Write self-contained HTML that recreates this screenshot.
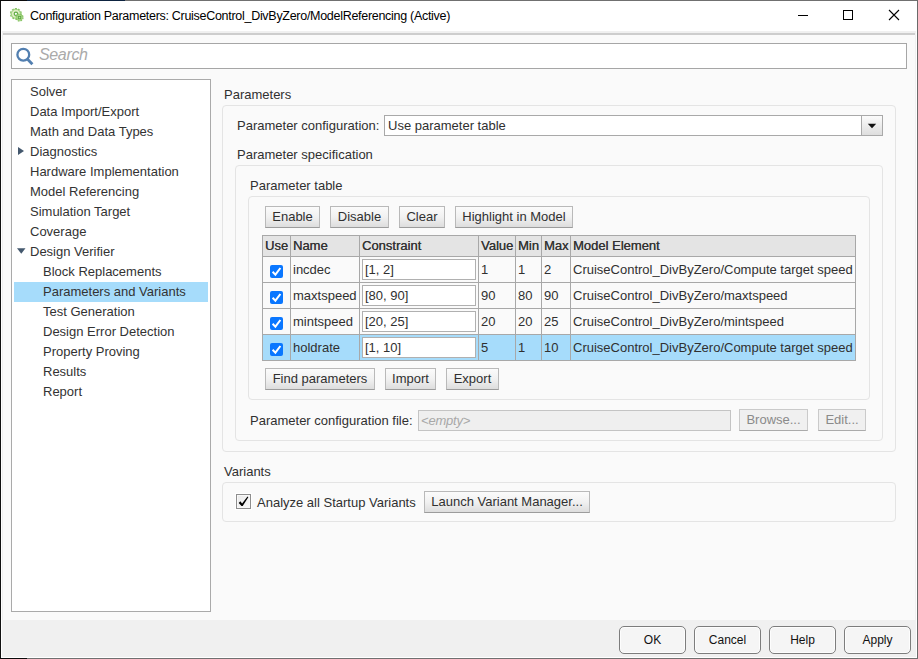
<!DOCTYPE html>
<html>
<head>
<meta charset="utf-8">
<title>Configuration Parameters</title>
<style>
html,body{margin:0;padding:0;}
body{width:918px;height:659px;overflow:hidden;background:#fff;font-family:"Liberation Sans",Arial,sans-serif;font-size:13px;color:#222;position:relative;}
.abs{position:absolute;}
#win{position:absolute;left:0;top:0;width:918px;height:659px;background:#fff;}
#bl{left:0;top:0;width:1px;height:659px;background:#111;}
#bt{left:0;top:0;width:918px;height:1px;background:linear-gradient(90deg,#0a0a0a 0,#0a0a0a 27px,#0d2340 27px,#0d2340 125px,#707070 125px);}
#br{left:917px;top:0;width:1px;height:659px;background:#6a6a6a;}
#bb{left:0;top:658px;width:918px;height:1px;background:linear-gradient(90deg,#0a0a0a 0,#0a0a0a 27px,#707070 27px);}
#title{left:30px;top:8px;font-size:12.5px;letter-spacing:-0.29px;line-height:16px;color:#000;white-space:nowrap;}
#client{left:2px;top:31px;width:914px;height:626px;background:#f0f0f0;}
#sep{left:3px;top:33px;width:912px;height:2px;background:#cdcdcd;}
#content{left:3px;top:35px;width:912px;height:585px;background:#fafafa;}
#search{left:11px;top:43px;width:894px;height:24px;border:1px solid #a6a6a6;background:#fff;}
#search .ph{left:27px;top:2px;font-size:16px;letter-spacing:-0.35px;line-height:18px;font-style:italic;color:#aaa;}
#tree{left:11px;top:79px;width:198px;height:531px;border:1px solid #aaa;background:#fff;}
.ti{position:absolute;left:18px;height:20px;line-height:20px;white-space:nowrap;color:#333;}
.ti.c{left:31px;}
#sel{left:2px;top:202px;width:194px;height:20px;background:#a6dcfb;}
.lbl{position:absolute;white-space:nowrap;line-height:16px;color:#303030;}
.grp{position:absolute;border:1px solid #e4e4e4;border-radius:4px;box-sizing:border-box;}
.btn{position:absolute;box-sizing:border-box;border:1px solid #b9b9b9;border-bottom-color:#9c9c9c;background:linear-gradient(#fbfbfb,#f1f1f1 50%,#dddddd);text-align:center;white-space:nowrap;color:#303030;}
.btn.dis{color:#8a8a8a;background:#f0f0f0;border-color:#cacaca;border-bottom-color:#ababab;}
.fbtn{position:absolute;box-sizing:border-box;border:1px solid #7d7d7d;background:#f5f5f5;border-radius:5px;text-align:center;color:#111;font-size:12px;box-shadow:inset 0 0 0 1px #fdfdfd;}

#sel2{}
.sbox{position:absolute;box-sizing:border-box;border:1px solid #a9a9a9;background:#fff;}
#ptab{position:absolute;left:262px;top:235px;border-collapse:collapse;table-layout:fixed;width:594px;}
#ptab td,#ptab th{border:1px solid #a8a8a8;padding:0 2px;font-size:13px;font-weight:normal;text-align:left;white-space:nowrap;overflow:hidden;color:#303030;box-sizing:border-box;}
#ptab th{height:21px;background:#e4e4e4;line-height:17px;padding-bottom:2px;color:#333;text-shadow:0.2px 0 0 #444;}
#ptab td{height:26px;background:#fafafa;line-height:23px;}
#ptab tr.hl td{background:#a6dcfb;}
#ptab .inp{display:block;box-sizing:border-box;width:114px;height:21px;border:1px solid #b0b0b0;background:#fff;line-height:20px;padding:0 2px;}
.cb{display:block;width:13px;height:13px;background:#0a77ff;border-radius:2px;margin:2px 0 0 5px;position:relative;top:1px;}
.cb svg{position:absolute;left:0;top:0;}

</style>
</head>
<body>
<div id="win">
  <div class="abs" id="title">Configuration Parameters: CruiseControl_DivByZero/ModelReferencing (Active)</div>
  <div class="abs" id="client"></div>
  <div class="abs" id="sep"></div>
  <div class="abs" id="content"></div>

  <div class="abs" id="search"><div class="abs ph">Search</div></div>

  <div class="abs" id="tree">
    <div class="abs" id="sel"></div>
    <div class="ti" style="top:2px">Solver</div>
    <div class="ti" style="top:22px">Data Import/Export</div>
    <div class="ti" style="top:42px">Math and Data Types</div>
    <div class="ti" style="top:62px">Diagnostics</div>
    <div class="ti" style="top:82px">Hardware Implementation</div>
    <div class="ti" style="top:102px">Model Referencing</div>
    <div class="ti" style="top:122px">Simulation Target</div>
    <div class="ti" style="top:142px">Coverage</div>
    <div class="ti" style="top:162px">Design Verifier</div>
    <div class="ti c" style="top:182px">Block Replacements</div>
    <div class="ti c" style="top:202px">Parameters and Variants</div>
    <div class="ti c" style="top:222px">Test Generation</div>
    <div class="ti c" style="top:242px">Design Error Detection</div>
    <div class="ti c" style="top:262px">Property Proving</div>
    <div class="ti c" style="top:282px">Results</div>
    <div class="ti c" style="top:302px">Report</div>
  </div>

  <!-- MAIN -->
  <div class="lbl" style="left:224px;top:87px">Parameters</div>
  <div class="grp" style="left:222px;top:105px;width:674px;height:347px"></div>
  <div class="lbl" style="left:237px;top:118px">Parameter configuration:</div>
  <div class="lbl" style="left:237px;top:147px">Parameter specification</div>
  <div class="grp" style="left:235px;top:165px;width:648px;height:276px"></div>
  <div class="lbl" style="left:250px;top:178px">Parameter table</div>
  <div class="grp" style="left:248px;top:196px;width:622px;height:204px"></div>

  <div class="lbl" style="left:224px;top:464px">Variants</div>
  <div class="grp" style="left:222px;top:482px;width:674px;height:40px"></div>


  <!-- select -->
  <div class="sbox" style="left:384px;top:115px;width:499px;height:21px;"></div>
  <div class="lbl" style="left:388px;top:118px">Use parameter table</div>
  <div class="abs" style="left:861px;top:115px;width:22px;height:21px;box-sizing:border-box;border:1px solid #a9a9a9;background:linear-gradient(#fbfbfb,#dedede);"></div>
  <svg class="abs" style="left:867px;top:123px" width="10" height="6" viewBox="0 0 10 6"><path d="M0.8 0.8 L9.2 0.8 L5 5.2 Z" fill="#111"/></svg>

  <!-- top buttons -->
  <div class="btn" style="left:265px;top:206px;width:55px;height:22px;line-height:20px">Enable</div>
  <div class="btn" style="left:330px;top:206px;width:59px;height:22px;line-height:20px">Disable</div>
  <div class="btn" style="left:399px;top:206px;width:46px;height:22px;line-height:20px">Clear</div>
  <div class="btn" style="left:455px;top:206px;width:118px;height:22px;line-height:20px">Highlight in Model</div>

  <table id="ptab">
    <colgroup><col style="width:28px"><col style="width:69px"><col style="width:119px"><col style="width:37px"><col style="width:26px"><col style="width:29px"><col style="width:285px"></colgroup>
    <tr><th>Use</th><th>Name</th><th>Constraint</th><th>Value</th><th>Min</th><th>Max</th><th>Model Element</th></tr>
    <tr><td><span class="cb"><svg width="13" height="13" viewBox="0 0 13 13"><path d="M2.6 6.7 L5.4 9.6 L10.4 3" fill="none" stroke="#fff" stroke-width="2"/></svg></span></td><td>incdec</td><td><span class="inp">[1, 2]</span></td><td>1</td><td>1</td><td>2</td><td>CruiseControl_DivByZero/Compute target speed</td></tr>
    <tr><td><span class="cb"><svg width="13" height="13" viewBox="0 0 13 13"><path d="M2.6 6.7 L5.4 9.6 L10.4 3" fill="none" stroke="#fff" stroke-width="2"/></svg></span></td><td>maxtspeed</td><td><span class="inp">[80, 90]</span></td><td>90</td><td>80</td><td>90</td><td>CruiseControl_DivByZero/maxtspeed</td></tr>
    <tr><td><span class="cb"><svg width="13" height="13" viewBox="0 0 13 13"><path d="M2.6 6.7 L5.4 9.6 L10.4 3" fill="none" stroke="#fff" stroke-width="2"/></svg></span></td><td>mintspeed</td><td><span class="inp">[20, 25]</span></td><td>20</td><td>20</td><td>25</td><td>CruiseControl_DivByZero/mintspeed</td></tr>
    <tr class="hl"><td><span class="cb"><svg width="13" height="13" viewBox="0 0 13 13"><path d="M2.6 6.7 L5.4 9.6 L10.4 3" fill="none" stroke="#fff" stroke-width="2"/></svg></span></td><td>holdrate</td><td><span class="inp">[1, 10]</span></td><td>5</td><td>1</td><td>10</td><td>CruiseControl_DivByZero/Compute target speed</td></tr>
  </table>

  <!-- bottom buttons -->
  <div class="btn" style="left:265px;top:368px;width:110px;height:22px;line-height:20px">Find parameters</div>
  <div class="btn" style="left:385px;top:368px;width:51px;height:22px;line-height:20px">Import</div>
  <div class="btn" style="left:446px;top:368px;width:53px;height:22px;line-height:20px">Export</div>

  <div class="lbl" style="left:250px;top:413px">Parameter configuration file:</div>
  <div class="sbox" style="left:418px;top:410px;width:313px;height:21px;background:#efefef;border-color:#c4c4c4;"></div>
  <div class="lbl" style="left:421px;top:413px;letter-spacing:-0.2px;font-style:italic;color:#a8a8a8">&lt;empty&gt;</div>
  <div class="btn dis" style="left:739px;top:409px;width:69px;height:22px;line-height:20px">Browse...</div>
  <div class="btn dis" style="left:818px;top:409px;width:48px;height:22px;line-height:20px">Edit...</div>

  <!-- variants -->
  <div class="abs" style="left:236px;top:494px;width:15px;height:15px;box-sizing:border-box;border:1px solid #8e8e8e;background:linear-gradient(135deg,#eaeaea,#f1f1f1 50%,#fafafa);box-shadow:0 0 0 1px #fff, inset 0 0 0 1px #f8f8f8;"></div>
  <svg class="abs" style="left:236px;top:494px" width="15" height="15" viewBox="0 0 15 15"><path d="M2.7 8.9 L4.3 7.3 L6.1 9.5 L11.5 2.6 L12.3 3.2 L6.7 12 L5.5 12 Z" fill="#000"/></svg>
  <div class="lbl" style="left:257px;top:495px">Analyze all Startup Variants</div>
  <div class="btn" style="left:424px;top:491px;width:166px;height:22px;line-height:20px">Launch Variant Manager...</div>

  <!-- footer buttons -->
  <div class="fbtn" style="left:619px;top:626px;width:67px;height:28px;line-height:26px">OK</div>
  <div class="fbtn" style="left:694px;top:626px;width:67px;height:28px;line-height:26px">Cancel</div>
  <div class="fbtn" style="left:769px;top:626px;width:67px;height:28px;line-height:26px">Help</div>
  <div class="fbtn" style="left:844px;top:626px;width:67px;height:28px;line-height:26px">Apply</div>

  <!-- title bar icons -->
  <div class="abs" style="left:798px;top:15px;width:10px;height:1px;background:#000"></div>
  <div class="abs" style="left:843px;top:10px;width:10px;height:10px;box-sizing:border-box;border:1px solid #000"></div>
  <svg class="abs" style="left:888px;top:9px" width="12" height="12" viewBox="0 0 12 12"><path d="M1 1 L11 11 M11 1 L1 11" stroke="#000" stroke-width="1.1" fill="none"/></svg>


  <!-- app icon -->
  <svg class="abs" style="left:9px;top:7px" width="16" height="16" viewBox="0 0 16 16">
    <circle cx="6.9" cy="6.8" r="5.2" fill="none" stroke="#86c463" stroke-width="1.4" stroke-dasharray="2.1 1.16"/>
    <circle cx="6.9" cy="6.8" r="4.5" fill="#deedc4" stroke="#93cc72" stroke-width="0.9"/>
    <circle cx="6.9" cy="6.8" r="1.7" fill="#fff" stroke="#5fab45" stroke-width="1.2"/>
    <circle cx="10.5" cy="10.5" r="3.5" fill="none" stroke="#84c360" stroke-width="1.3" stroke-dasharray="1.5 1.25"/>
    <circle cx="10.5" cy="10.5" r="3.1" fill="#a9d689" stroke="#84c360" stroke-width="0.6"/>
    <rect x="9.4" y="9.4" width="2.3" height="2.3" fill="#b9dd9c" stroke="#5ca743" stroke-width="0.9"/>
  </svg>

  <!-- search icon -->
  <svg class="abs" style="left:14px;top:46px" width="22" height="22" viewBox="0 0 22 22"><circle cx="9.3" cy="8.7" r="5.9" fill="none" stroke="#527fb0" stroke-width="2.3"/><path d="M13.6 13.2 L18.4 18.2" stroke="#527fb0" stroke-width="2.8" stroke-linecap="butt"/></svg>

  <!-- tree arrows -->
  <svg class="abs" style="left:18px;top:147px" width="6" height="8" viewBox="0 0 6 8"><path d="M0 0 L6 4 L0 8 Z" fill="#44586e"/></svg>
  <svg class="abs" style="left:17px;top:248px" width="8.5" height="6" viewBox="0 0 9 6"><path d="M0 0 L9 0 L4.5 6 Z" fill="#44586e"/></svg>

  <div class="abs" id="bl"></div><div class="abs" id="bt"></div><div class="abs" id="br"></div><div class="abs" id="bb"></div>
</div>
</body>
</html>
